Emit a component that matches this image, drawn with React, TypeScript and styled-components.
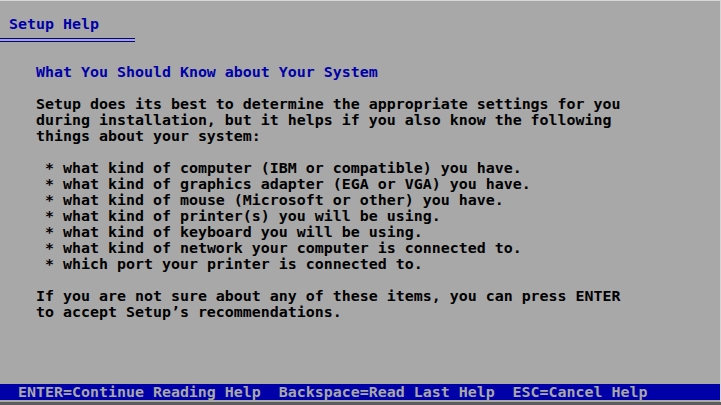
import React from 'react';
import styled, { createGlobalStyle } from 'styled-components';

const GlobalStyle = createGlobalStyle`
    html, body {
        margin:0;
        padding:0;
        background:#a8a8a8;
        overflow:hidden;
    }
`;

export const Frame = styled.div`
    width:721px;
    height:405px;
    box-sizing:border-box;
    background:#a8a8a8;
    border-bottom:3px solid #5c5c5c;
    box-shadow: inset 0 1px 0 #d6d6d6, inset -1px 0 0 #d6d6d6;
`;

export const Screen = styled.div`
    width:720px;
    height:400px;
    display:flex;
    flex-direction:column;
    font-family:"DejaVu Sans Mono", "Liberation Mono", monospace;
    font-weight:700;
    font-size:14.95px;
    line-height:16px;
    white-space:pre;
    color:#000;
`;

export const Row = styled.div<{ $tone?: 'blue' | 'black'; $indent?: number }>`
    height:16px;
    padding-left:${p => (p.$indent ?? 0) * 9}px;
    color:${p => (p.$tone === 'blue' ? '#0000a8' : '#000')};
`;

export const Spacer = styled.div<{ $rows: number }>`
    height:${p => p.$rows * 16}px;
`;

export const RuleRow = styled.div`
    height:16px;
    display:flex;
    align-items:flex-start;
`;

export const DoubleRule = styled.div`
    width:135px;
    height:2px;
    margin-top:6px;
    border-top:1px solid #0000a8;
    border-bottom:1px solid #0000a8;
`;

export const Body = styled.div`
    flex:1;
    display:flex;
    flex-direction:column;
`;

export const StatusBar = styled.div`
    height:16px;
    background:#0000a8;
    color:#a8a8a8;
    padding-left:18px;
`;

const intro = [
    'Setup does its best to determine the appropriate settings for you',
    'during installation, but it helps if you also know the following',
    'things about your system:',
];

const items = [
    'what kind of computer (IBM or compatible) you have.',
    'what kind of graphics adapter (EGA or VGA) you have.',
    'what kind of mouse (Microsoft or other) you have.',
    'what kind of printer(s) you will be using.',
    'what kind of keyboard you will be using.',
    'what kind of network your computer is connected to.',
    'which port your printer is connected to.',
];

const outro = [
    'If you are not sure about any of these items, you can press ENTER',
    "to accept Setup\u2019s recommendations.",
];

function App() {
    return (
        <>
            <GlobalStyle />
            <Frame>
                <Screen>
                    <Spacer $rows={1} />
                    <Row $tone="blue" $indent={1}>Setup Help</Row>
                    <RuleRow><DoubleRule /></RuleRow>
                    <Body>
                        <Spacer $rows={1} />
                        <Row $tone="blue" $indent={4}>What You Should Know about Your System</Row>
                        <Spacer $rows={1} />
                        {intro.map(line => <Row key={line} $indent={4}>{line}</Row>)}
                        <Spacer $rows={1} />
                        {items.map(line => <Row key={line} $indent={5}>{'* ' + line}</Row>)}
                        <Spacer $rows={1} />
                        {outro.map(line => <Row key={line} $indent={4}>{line}</Row>)}
                    </Body>
                    <StatusBar>ENTER=Continue Reading Help  Backspace=Read Last Help  ESC=Cancel Help</StatusBar>
                </Screen>
            </Frame>
        </>
    );
}

export default App;
